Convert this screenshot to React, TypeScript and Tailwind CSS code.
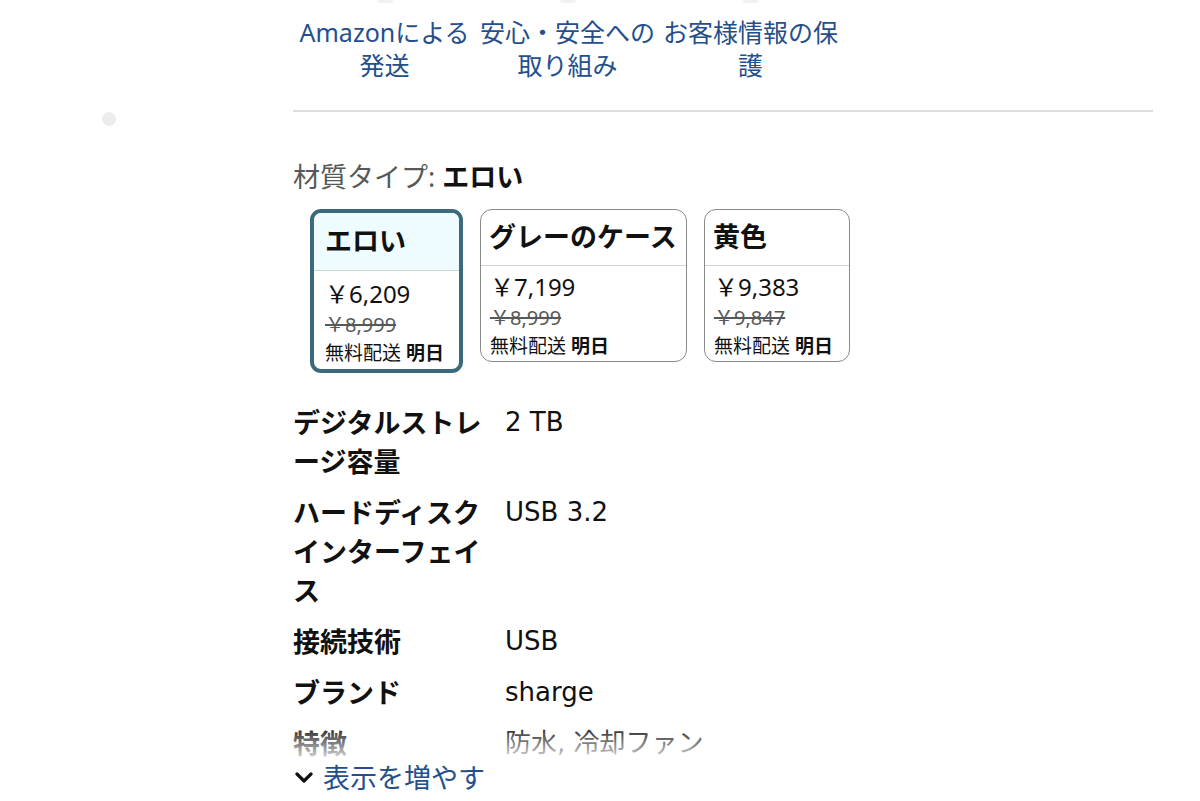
import React from "react";

const FONT = { fontFamily: '"Noto Sans", "Noto Sans CJK JP", sans-serif' };
const VAL = { fontFamily: '"DejaVu Sans", "Noto Sans CJK JP", sans-serif' };

function TopCol({ lines }: { lines: string[] }) {
  return (
    <div className="w-[183px] flex flex-col items-center">
      <div className="w-[16px] h-[3px] rounded-b-full bg-[#f1f1f1]" />
      <div className="mt-[13px] text-center text-[25px] leading-[33px] text-[#244f8c]">
        {lines.map((l, i) => (
          <div key={i} className="whitespace-nowrap">{l}</div>
        ))}
      </div>
    </div>
  );
}

function Card({
  title,
  price,
  was,
  selected,
  width,
}: {
  title: string;
  price: string;
  was: string;
  selected?: boolean;
  width: string;
}) {
  if (selected) {
    return (
      <div className={`${width} border-4 border-[#3b6a7d] rounded-[11px] overflow-hidden bg-white flex flex-col`}>
        <div className="h-[58px] bg-[#effcff] border-b border-[#cfd4d6] px-[11px] flex items-center text-[27px] font-bold text-[#111] whitespace-nowrap">
          {title}
        </div>
        <div className="px-[11px] pt-[8px] pb-[2px] whitespace-nowrap">
          <div className="text-[24px] leading-[30px] text-[#111]">{price}</div>
          <div className="text-[20px] leading-[31px] text-[#565959] line-through">{was}</div>
          <div className="text-[19px] leading-[27px] text-[#111]">
            無料配送 <span className="font-bold">明日</span>
          </div>
        </div>
      </div>
    );
  }
  return (
    <div className={`${width} border border-[#8a8a8a] rounded-[12px] overflow-hidden bg-white flex flex-col`}>
      <div className="h-[56px] border-b border-[#d3d3d3] px-[8px] flex items-center text-[27px] font-bold text-[#111] whitespace-nowrap">
        {title}
      </div>
      <div className="px-[9px] pt-[6px] pb-[1px] whitespace-nowrap">
        <div className="text-[24px] leading-[30px] text-[#111]">{price}</div>
        <div className="text-[20px] leading-[31px] text-[#565959] line-through">{was}</div>
        <div className="text-[19px] leading-[27px] text-[#111]">
          無料配送 <span className="font-bold">明日</span>
        </div>
      </div>
    </div>
  );
}

function Row({ label, value }: { label: string; value: string }) {
  return (
    <div className="flex text-[27px] leading-[39px] text-[#111]">
      <div className="w-[212px] pr-[20px] font-bold">{label}</div>
      <div className="flex-1 text-[26px]" style={VAL}>{value}</div>
    </div>
  );
}

export default function App() {
  return (
    <div className="relative w-[1200px] h-[801px] overflow-hidden bg-white" style={FONT}>
      <div className="absolute left-[102px] top-[112px] w-[14px] h-[14px] rounded-full bg-[#ececec]" />
      <div className="ml-[293px] w-[860px]">
        <div className="flex">
          <TopCol lines={["Amazonによる", "発送"]} />
          <TopCol lines={["安心・安全への", "取り組み"]} />
          <TopCol lines={["お客様情報の保", "護"]} />
        </div>
        <div className="mt-[28px] h-[2px] bg-[#dddddd]" />
        <div className="mt-[47px] text-[27px] leading-[36px] text-[#565959] whitespace-nowrap">
          材質タイプ: <span className="font-bold text-[#111]">エロい</span>
        </div>
        <div className="mt-[14px] ml-[17px] flex items-start gap-[17px]">
          <Card selected width="w-[153px]" title="エロい" price="￥6,209" was="￥8,999" />
          <Card width="w-[207px]" title="グレーのケース" price="￥7,199" was="￥8,999" />
          <Card width="w-[146px]" title="黄色" price="￥9,383" was="￥9,847" />
        </div>
        <div className="mt-[30px] flex flex-col gap-[12px]">
          <Row label="デジタルストレージ容量" value="2 TB" />
          <Row label="ハードディスクインターフェイス" value="USB 3.2" />
          <Row label="接続技術" value="USB" />
          <Row label="ブランド" value="sharge" />
          <div className="relative">
            <Row label="特徴" value="防水, 冷却ファン" />
            <div className="absolute inset-0 bg-gradient-to-b from-white/0 to-white/95" />
          </div>
        </div>
        <div className="mt-[-3px] flex items-center gap-[10px] text-[27px] leading-[36px] text-[#244f8c]">
          <svg width="18" height="12" viewBox="0 0 18 12" className="ml-[2px]">
            <polyline points="2,2 9,9 16,2" fill="none" stroke="#111" strokeWidth="3.2" strokeLinecap="round" strokeLinejoin="round" />
          </svg>
          <span>表示を増やす</span>
        </div>
      </div>
    </div>
  );
}
